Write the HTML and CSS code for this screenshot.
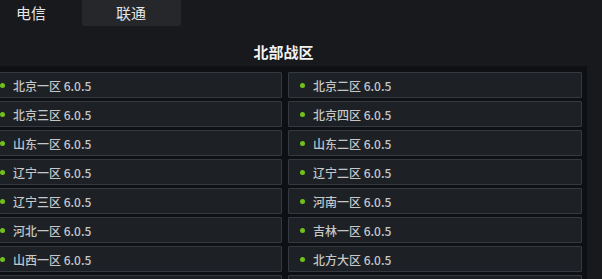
FILE: index.html
```html
<!doctype html>
<html>
<head>
	<meta charset="utf-8">
	<link rel="stylesheet" href="styles.css">
</head>
<body>

<div class="tabs">
	<div class="tab">电信</div>
	<div class="tab active">联通</div>
</div>

<div class="zone">
	<h2 class="zone-title">北部战区</h2>
	<div class="server-list">
		<div class="server"><i class="dot"></i>北京一区 6.0.5</div>
		<div class="server"><i class="dot"></i>北京二区 6.0.5</div>
		<div class="server"><i class="dot"></i>北京三区 6.0.5</div>
		<div class="server"><i class="dot"></i>北京四区 6.0.5</div>
		<div class="server"><i class="dot"></i>山东一区 6.0.5</div>
		<div class="server"><i class="dot"></i>山东二区 6.0.5</div>
		<div class="server"><i class="dot"></i>辽宁一区 6.0.5</div>
		<div class="server"><i class="dot"></i>辽宁二区 6.0.5</div>
		<div class="server"><i class="dot"></i>辽宁三区 6.0.5</div>
		<div class="server"><i class="dot"></i>河南一区 6.0.5</div>
		<div class="server"><i class="dot"></i>河北一区 6.0.5</div>
		<div class="server"><i class="dot"></i>吉林一区 6.0.5</div>
		<div class="server"><i class="dot"></i>山西一区 6.0.5</div>
		<div class="server"><i class="dot"></i>北方大区 6.0.5</div>
		<div class="server"></div>
		<div class="server"></div>
	</div>
</div>

</body>
</html>
```

FILE: styles.css
```css
html, body {
    margin: 0;
    height: 100%;
    overflow: hidden;
}

body {
    background: #17191d;
    color: #c9cbcd;
    font-family: "Noto Sans CJK SC", "Noto Sans", sans-serif;
}

.tabs {
    display: flex;
    height: 26px;
}

.tab {
    padding: 0 34px;
    font-size: 15px;
    line-height: 26px;
    color: #e4e5e6;
}

.tab:first-child {
    padding: 0 36px 0 16px;
}

.tab.active {
    width: 31px;
    background: #25272a;
    border-radius: 0 0 2px 2px;
}

.zone {
    margin-left: -15px;
    width: 602px;
}

.zone-title {
    margin: 16px 0 4px 0;
    padding-right: 5px;
    text-align: center;
    font-size: 15px;
    line-height: 20px;
    font-weight: bold;
    color: #f2f2f2;
}

.server-list {
    display: grid;
    grid-template-columns: 1fr 1fr;
    grid-auto-rows: 26px;
    gap: 3px 6px;
    padding: 6px 5px 20px 3px;
    background: #0e1013;
}

.server {
    display: flex;
    align-items: center;
    box-sizing: border-box;
    padding-left: 11px;
    background: #1d2126;
    border: 1px solid #343a3f;
    border-radius: 1px;
    font-size: 12px;
    font-weight: 500;
    color: #c5c7c9;
}

.dot {
    width: 5px;
    height: 5px;
    margin-right: 8px;
    border-radius: 50%;
    background: #72c11b;
}
```
